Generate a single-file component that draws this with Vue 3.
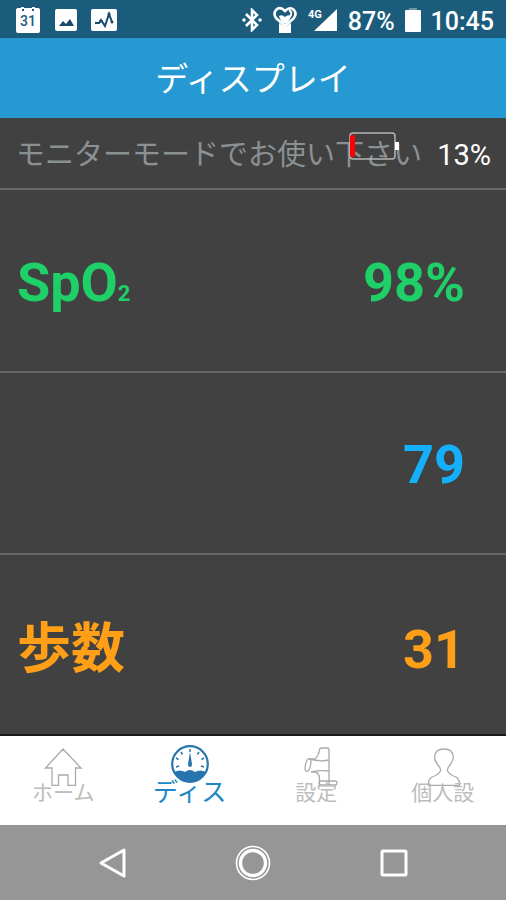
<template>
  <div class="screen">
    <div class="status-bar">
      <div class="status-group">
        <svg class="ic-calendar" viewBox="0 0 26 28">
          <path d="M3 2h3V1h3v1h8V1h3v1h3q2 0 2 2v21q0 2-2 2H3q-2 0-2-2V4q0-2 2-2z" fill="#fff"/>
          <path d="M7 4h2M17 4h2" stroke="#1b5b7c" stroke-width="2"/>
          <text x="13" y="20" text-anchor="middle">31</text>
        </svg>
        <svg class="ic-picture" viewBox="0 0 22 22">
          <rect width="22" height="22" rx="2" fill="#fff"/>
          <path d="M4 17l4-5 3 3 4-5 4 7z" fill="#164a6b"/>
        </svg>
        <svg class="ic-graph" viewBox="0 0 26 22">
          <rect width="26" height="22" rx="2" fill="#fff"/>
          <path d="M4 14h4l2-3 4 6 4-12 3 8" fill="none" stroke="#164a6b" stroke-width="2"/>
          <circle cx="10" cy="12" r="1.5" fill="#164a6b"/>
          <circle cx="18" cy="5" r="1.5" fill="#164a6b"/>
          <circle cx="21" cy="13" r="1.5" fill="#164a6b"/>
        </svg>
      </div>
      <div class="status-group right">
        <svg class="ic-bluetooth" viewBox="0 0 20 24">
          <path d="M4 6l11 11-5 5V2l5 5L4 18" fill="none" stroke="#fff" stroke-width="2.6"/>
          <circle cx="2" cy="12" r="1.8" fill="#fff"/>
          <circle cx="18" cy="12" r="1.8" fill="#fff"/>
        </svg>
        <svg class="ic-heart" viewBox="0 0 26 28">
          <path d="M13 20L4 12q-3-4 0-8 4-4 9 1 5-5 9-1 3 4 0 8z" fill="none" stroke="#fff" stroke-width="2.6"/>
          <path d="M7 10q3-2 6 1 3-3 6-1-1 5-6 8-5-3-6-8zM7 17l6 4 6-4v10H7z" fill="#fff"/>
          <path d="M17 4q4 2 1 7" fill="none" stroke="#fff" stroke-width="2"/>
        </svg>
        <svg class="ic-signal" viewBox="0 0 30 24">
          <path d="M29 1v22H6z" fill="#fff"/>
          <text x="0" y="10">4G</text>
        </svg>
        <span class="status-text">87%</span>
        <svg class="ic-battery" viewBox="0 0 16 24">
          <path d="M4 0h8v3H4z" fill="#6d94a9"/>
          <rect y="2" width="16" height="22" rx="1" fill="#fff"/>
        </svg>
        <span class="status-text">10:45</span>
      </div>
    </div>

    <header class="title-bar">
      <h1>ディスプレイ</h1>
    </header>

    <div class="notice">
      <span class="notice-text">モニターモードでお使い下さい</span>
      <svg class="device-battery" viewBox="0 0 50 28">
        <rect x="1" y="1" width="45" height="26" rx="3" fill="none" stroke="#b5b5b5" stroke-width="1.5"/>
        <rect x="1" y="3" width="5" height="22" rx="2" fill="#f00"/>
        <rect x="46" y="10" width="4" height="8" fill="#fff"/>
      </svg>
      <span class="notice-level">{{ level }}%</span>
    </div>

    <main class="readings">
      <div v-for="item in readings" :key="item.key" class="reading" :class="item.key">
        <span>{{ item.label }}<small v-if="item.sub">{{ item.sub }}</small></span>
        <span class="value">{{ item.value }}</span>
      </div>
    </main>

    <nav class="tabs">
      <button
        v-for="tab in tabs"
        :key="tab.key"
        type="button"
        class="tab"
        :class="{active: current === tab.key}"
        @click="current = tab.key"
      >
        <svg class="tab-icon" viewBox="0 0 48 42">
          <path v-if="tab.key === 'home'" d="M24 5L42 24H36.5V41.3H29V31H19.5V41.3H13V24H6.5Z"/>
          <g v-else-if="tab.key === 'display'" class="gauge">
            <circle cx="24" cy="20" r="17.8" stroke-width="2.2"/>
            <path d="M8 28Q14 25 19 28Q24 24 29 28Q34 25 40 28Q35 38 24 38Q13 38 8 28Z" class="solid"/>
            <path d="M24 8L26 20Q26 23 24 23Q22 23 22 20Z" class="solid"/>
            <path d="M24 5v3M15 8l1.5 2.5M33 8l-1.5 2.5M10 14l2.5 1.5M38 14l-2.5 1.5M10 23l3-1M38 23l-3-1" stroke-width="1.5"/>
          </g>
          <g v-else-if="tab.key === 'settings'">
            <path d="M23 15Q27 11 27.5 6Q27.5 4 30 4H35Q37 4 37 6V41M23 28Q27.5 29 27.5 35V41"/>
            <path d="M23 15L17 15Q29 18 37 16M19 28Q28 26 37 27M23 28L19 28"/>
            <ellipse cx="16" cy="21" rx="2.5" ry="6.5" transform="rotate(12 16 21)"/>
            <rect x="27" y="37" width="18" height="4" rx="2"/>
          </g>
          <path v-else d="M21.5 27Q22 24 19 21Q15.5 17 15.5 13Q16 5 25 5Q34 5 34.3 13Q34 17 31 21Q28 24 28.5 27Q31 31 37 33Q41 36 40.5 41.3H9.3Q9 36 13 33Q19 31 21.5 27Z"/>
        </svg>
        <span class="tab-label">{{ tab.label }}</span>
      </button>
    </nav>

    <div class="system-nav">
      <button type="button" aria-label="戻る">
        <svg viewBox="0 0 36 36"><path d="M30 5V31L7 18Z" stroke-width="3"/></svg>
      </button>
      <button type="button" aria-label="ホーム画面">
        <svg viewBox="0 0 36 36">
          <circle cx="18" cy="18" r="16.5" stroke-width="1.6"/>
          <circle cx="18" cy="18" r="12.5" stroke-width="3.4"/>
        </svg>
      </button>
      <button type="button" aria-label="履歴">
        <svg viewBox="0 0 36 36"><rect x="6" y="6" width="24" height="24" rx="1" stroke-width="3"/></svg>
      </button>
    </div>
  </div>
</template>

<script setup>
import {ref} from "vue";

const level = ref(13)
const current = ref('display')

const readings = ref([
  {key: 'spo2', label: 'SpO', sub: '2', value: '98%'},
  {key: 'pulse', label: '', value: '79'},
  {key: 'steps', label: '歩数', value: '31'},
])

const tabs = [
  {key: 'home', label: 'ホーム'},
  {key: 'display', label: 'ディス'},
  {key: 'settings', label: '設定'},
  {key: 'personal', label: '個人設'},
]
</script>

<style>
body{
  margin: 0;
}
</style>

<style scoped>
.screen{
  display: flex;
  flex-direction: column;
  min-height: 100vh;
  background-color: #414141;
  font-family: Roboto, "Noto Sans CJK JP", sans-serif;
}
button{
  border: 0;
  padding: 0;
  background: none;
  font-family: inherit;
  cursor: pointer;
}
.status-bar{
  display: flex;
  justify-content: space-between;
  box-sizing: border-box;
  height: 38px;
  padding: 2px 12px 0 15px;
  background-color: #1b5b7c;
}
.status-group{
  display: flex;
  align-items: center;
  gap: 14px;
}
.status-group.right{
  gap: 10px;
}
.status-text{
  color: #fff;
  font-size: 25px;
  font-weight: 500;
  line-height: 32px;
  padding-top: 3px;
}
.status-group svg{
  flex: none;
}
.ic-calendar{
  width: 26px;
  height: 28px;
}
.ic-calendar text{
  font-size: 14px;
  font-weight: 500;
  fill: #1b5b7c;
}
.ic-picture{
  width: 22px;
  height: 22px;
}
.ic-graph{
  width: 26px;
  height: 22px;
}
.ic-bluetooth{
  width: 20px;
  height: 24px;
}
.ic-heart{
  width: 26px;
  height: 28px;
}
.ic-signal{
  width: 30px;
  height: 24px;
}
.ic-signal text{
  font-size: 11px;
  font-weight: bold;
  fill: #fff;
}
.ic-battery{
  width: 16px;
  height: 24px;
}
.title-bar{
  display: flex;
  align-items: center;
  justify-content: center;
  box-sizing: border-box;
  height: 80px;
  padding-top: 4px;
  background-color: #2699d2;
}
.title-bar h1{
  margin: 0;
  color: #fff;
  font-size: 33px;
  font-weight: 400;
  line-height: 40px;
}
.notice{
  position: relative;
  display: flex;
  align-items: center;
  justify-content: space-between;
  box-sizing: border-box;
  height: 72px;
  padding: 3px 15px 0 16px;
  border-bottom: 2px solid #686868;
  font-size: 29px;
  line-height: 40px;
  white-space: nowrap;
}
.notice-text{
  color: #8b9193;
}
.notice-level{
  color: #fff;
}
.device-battery{
  position: absolute;
  top: 14px;
  right: 107px;
  width: 50px;
  height: 28px;
}
.readings{
  display: grid;
  flex: 1;
  grid-auto-rows: 1fr;
  border-bottom: 2px solid #191919;
}
.reading{
  display: flex;
  align-items: baseline;
  align-content: center;
  flex-wrap: wrap;
  justify-content: space-between;
  padding: 4px 41px 0 17px;
  font-size: 54px;
  font-weight: bold;
  line-height: 64px;
}
.reading + .reading{
  border-top: 2px solid #666;
}
.reading small{
  font-size: 22px;
  line-height: 24px;
}
.spo2{
  color: #1fcf68;
}
.pulse{
  color: #14b0fb;
}
.steps{
  padding-top: 12px;
  color: #fe9f17;
}
.tabs{
  display: flex;
  height: 89px;
  background-color: #fff;
}
.tab{
  display: flex;
  flex: 1;
  flex-direction: column;
  align-items: center;
  padding-top: 8px;
  color: #bcbcbc;
  font-size: 21px;
}
.tab.active{
  color: #1c87c5;
  font-size: 25px;
}
.tab-icon{
  width: 48px;
  height: 42px;
  overflow: visible;
  fill: none;
  stroke: #aaa;
  stroke-width: 1.3;
}
.gauge{
  stroke: #2675ae;
}
.solid{
  fill: #2675ae;
  stroke: none;
}
.tab-label{
  margin-top: -5px;
  line-height: 24px;
}
.system-nav{
  display: flex;
  height: 75px;
  padding: 0 42px;
  background-color: #969696;
}
.system-nav button{
  display: flex;
  flex: 1;
  align-items: center;
  justify-content: center;
}
.system-nav svg{
  width: 36px;
  height: 36px;
  fill: none;
  stroke: #fff;
  stroke-linejoin: round;
}
</style>
